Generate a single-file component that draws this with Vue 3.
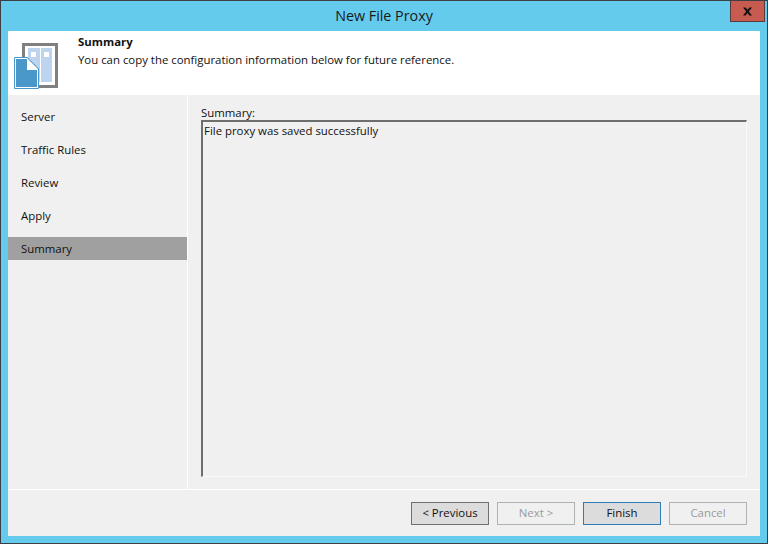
<script setup>
const steps = ['Server', 'Traffic Rules', 'Review', 'Apply', 'Summary']
const buttons = [
  { label: '< Previous', kind: 'focus' },
  { label: 'Next >', kind: 'off' },
  { label: 'Finish', kind: 'primary' },
  { label: 'Cancel', kind: 'off' }
]
</script>

<template>
  <div class="window">
    <!--title bar with close button-->
    <div class="titlebar">
      <span class="title">New File Proxy</span>
      <div class="close">
        <svg width="11" height="9" viewBox="0 0 11 9">
          <path d="M1 0.5h2.6l1.9 2.3 1.9-2.3h2.6l-3.2 3.9 3.2 4.1h-2.6l-1.9-2.4-1.9 2.4h-2.6l3.2-4.1z" fill="#111" />
        </svg>
      </div>
    </div>

    <div class="body">
      <!--white header-->
      <div class="header">
        <svg class="logo" width="46" height="48" viewBox="0 0 46 48">
          <rect x="9.5" y="1.5" width="33" height="42" fill="#fff" stroke="#808080" stroke-width="3" />
          <rect x="14" y="5" width="12" height="34" fill="#bcd4ee" />
          <rect x="27" y="5" width="11" height="34" fill="#bcd4ee" />
          <rect x="17" y="9" width="5" height="5" fill="#fff" />
          <rect x="30" y="9" width="5" height="5" fill="#fff" />
          <path d="M0.5 14.5H13L24.5 26V45.5H0.5Z" fill="#fff" stroke="#4a98c9" />
          <path d="M2 16H13V27H23V44H2Z" fill="#4a98c9" />
          <path d="M13 14L25 26" fill="none" stroke="#4a98c9" stroke-dasharray="1 1" />
        </svg>
        <div class="header-text">
          <div class="header-title">Summary</div>
          <div>You can copy the configuration information below for future reference.</div>
        </div>
      </div>

      <div class="middle">
        <!--wizard steps-->
        <nav class="nav">
          <div v-for="s in steps" :key="s" class="step" :class="{ active: s === 'Summary' }">{{ s }}</div>
        </nav>
        <!--summary text box-->
        <section class="content">
          <label class="label">Summary:</label>
          <div class="box">File proxy was saved successfully</div>
        </section>
      </div>

      <!--bottom buttons-->
      <div class="footer">
        <button v-for="b in buttons" :key="b.label" class="btn" :class="b.kind">{{ b.label }}</button>
      </div>
    </div>
  </div>
</template>

<style scoped>
.window {
  width: 768px;
  height: 544px;
  box-sizing: border-box;
  border: 1px solid #3a3f44;
  background: #65cbec;
  display: flex;
  flex-direction: column;
  padding: 0 7px 7px;
  font-family: "Open Sans", "Noto Sans", sans-serif;
  font-size: 11.4px;
  color: #111;
}

.titlebar {
  height: 30px;
  flex: none;
  display: flex;
  justify-content: center;
  align-items: flex-start;
  position: relative;
}

.title {
  font-size: 14.3px;
  line-height: 30px;
  color: #1a1a1a;
}

.close {
  position: absolute;
  top: 0;
  right: -5px;
  width: 33px;
  height: 20px;
  background: #c75b50;
  border: 1px solid #5a3a3a;
  border-top: none;
  display: flex;
  align-items: center;
  justify-content: center;
}

.body {
  flex: 1;
  display: flex;
  flex-direction: column;
  background: #f0f0f0;
  min-height: 0;
}

.header {
  height: 64px;
  flex: none;
  background: #fff;
  display: flex;
  padding-left: 6px;
}

.logo {
  margin-top: 12px;
  flex: none;
}

.header-text {
  margin-left: 18px;
  padding-top: 2px;
  line-height: 18px;
}

.header-title {
  font-weight: 700;
}

.middle {
  flex: 1;
  display: flex;
  min-height: 0;
  border-bottom: 1px solid #fff;
}

.nav {
  width: 179px;
  flex: none;
  border-right: 1px solid #fff;
  padding-top: 10px;
}

.step {
  height: 23px;
  line-height: 23px;
  padding-left: 13px;
  margin-bottom: 10px;
}

.step.active {
  background: #a0a0a0;
}

.content {
  flex: 1;
  display: flex;
  flex-direction: column;
  padding: 10px 13px 12px 13px;
}

.label {
  line-height: 15px;
}

.box {
  flex: 1;
  border-top: 2px solid #6e6e6e;
  border-left: 2px solid #6e6e6e;
  border-right: 1px solid #fafafa;
  border-bottom: 1px solid #fafafa;
  padding: 1px 0 0 1px;
  line-height: 16px;
}

.footer {
  height: 46px;
  flex: none;
  display: flex;
  gap: 8px;
  justify-content: flex-end;
  align-items: center;
  padding-right: 13px;
}

.btn {
  width: 78px;
  height: 23px;
  box-sizing: border-box;
  font: inherit;
  padding: 0 0 2px;
  color: #111;
  background: #dcdcdc;
  border: 1px solid #707070;
}

.btn.primary {
  border-color: #2f7db8;
}

.btn.off {
  background: #f0f0f0;
  border-color: #adb2b5;
  color: #9a9a9a;
}
</style>

<style>
body {
  background: #65cbec;
}
</style>
